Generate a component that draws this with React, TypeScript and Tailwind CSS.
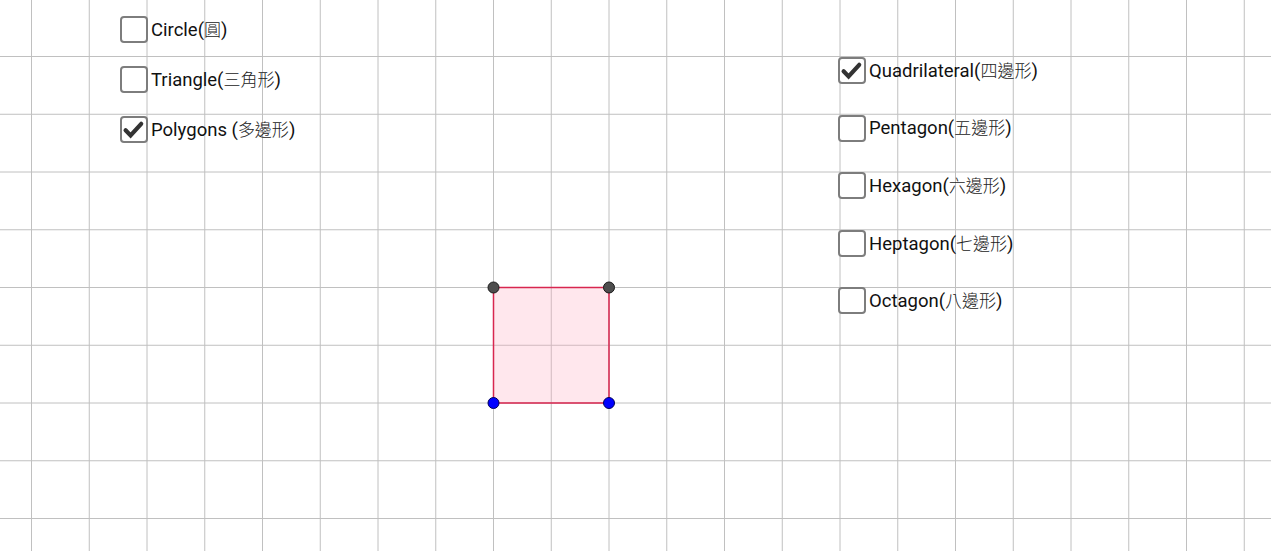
const STEP = 57.75;
const X0 = 31;
const Y0 = 56;

const vLines = Array.from({ length: 22 }, (_, k) => X0 + STEP * k + 0.5);
const hLines = Array.from({ length: 9 }, (_, k) => Y0 + STEP * k + 0.5);

type Item = { label: string; cjk: string; checked?: boolean };

const leftItems: Item[] = [
  { label: 'Circle(', cjk: '圓' },
  { label: 'Triangle(', cjk: '三角形' },
  { label: 'Polygons (', cjk: '多邊形', checked: true },
];

const rightItems: Item[] = [
  { label: 'Quadrilateral(', cjk: '四邊形', checked: true },
  { label: 'Pentagon(', cjk: '五邊形' },
  { label: 'Hexagon(', cjk: '六邊形' },
  { label: 'Heptagon(', cjk: '七邊形' },
  { label: 'Octagon(', cjk: '八邊形' },
];

function CheckBox({ checked }: { checked?: boolean }) {
  return (
    <div className="w-[27.5px] h-[27px] shrink-0 rounded-[4px] border-2 border-[#7d7d7d] bg-white">
      {checked && (
        <svg width="24" height="23" viewBox="0 0 24 23" className="block">
          <polyline
            points="3.6,12.2 8.6,17.4 19.2,5.8"
            fill="none"
            stroke="#333333"
            strokeWidth="4.2"
            strokeLinecap="round"
            strokeLinejoin="miter"
          />
        </svg>
      )}
    </div>
  );
}

function Row({ item }: { item: Item }) {
  return (
    <div className="flex items-center h-[27px]">
      <CheckBox checked={item.checked} />
      <span className="ml-[3.5px] text-[18.5px] leading-none text-[#111] whitespace-nowrap">
        {item.label}
        <span
          className="text-[17px] text-[#222] font-light"
          style={{ fontFamily: '"Noto Sans CJK TC", "Noto Sans CJK SC", sans-serif' }}
        >
          {item.cjk}
        </span>
        )
      </span>
    </div>
  );
}

function Canvas() {
  return (
    <svg width="1271" height="551" className="absolute inset-0 block">
      {vLines.map((x) => (
        <line key={'v' + x} x1={x} y1={0} x2={x} y2={551} stroke="#c0c0c0" strokeWidth="1" />
      ))}
      {hLines.map((y) => (
        <line key={'h' + y} x1={0} y1={y} x2={1271} y2={y} stroke="#c0c0c0" strokeWidth="1" />
      ))}
      <polygon
        points="493.5,287.5 609,287.5 609,403 493.5,403"
        fill="rgba(255,170,190,0.28)"
        stroke="#d8264f"
        strokeWidth="1.5"
      />
      <circle cx="493.5" cy="287.5" r="5.5" fill="#4d4d4d" stroke="#1a1a1a" strokeWidth="1" />
      <circle cx="609" cy="287.5" r="5.5" fill="#4d4d4d" stroke="#1a1a1a" strokeWidth="1" />
      <circle cx="493.5" cy="403" r="5.5" fill="#0000ff" stroke="#00005a" strokeWidth="1" />
      <circle cx="609" cy="403" r="5.5" fill="#0000ff" stroke="#00005a" strokeWidth="1" />
    </svg>
  );
}

export default function App() {
  return (
    <div
      className="relative w-[1271px] h-[553px] bg-white overflow-hidden"
      style={{ fontFamily: 'Roboto, "Noto Sans CJK TC", sans-serif' }}
    >
      <Canvas />
      <div className="absolute left-[120px] top-[16px] flex flex-col gap-[23px]">
        {leftItems.map((it) => (
          <Row key={it.label} item={it} />
        ))}
      </div>
      <div className="absolute left-[838px] top-[57px] flex flex-col gap-[30.6px]">
        {rightItems.map((it) => (
          <Row key={it.label} item={it} />
        ))}
      </div>
    </div>
  );
}
